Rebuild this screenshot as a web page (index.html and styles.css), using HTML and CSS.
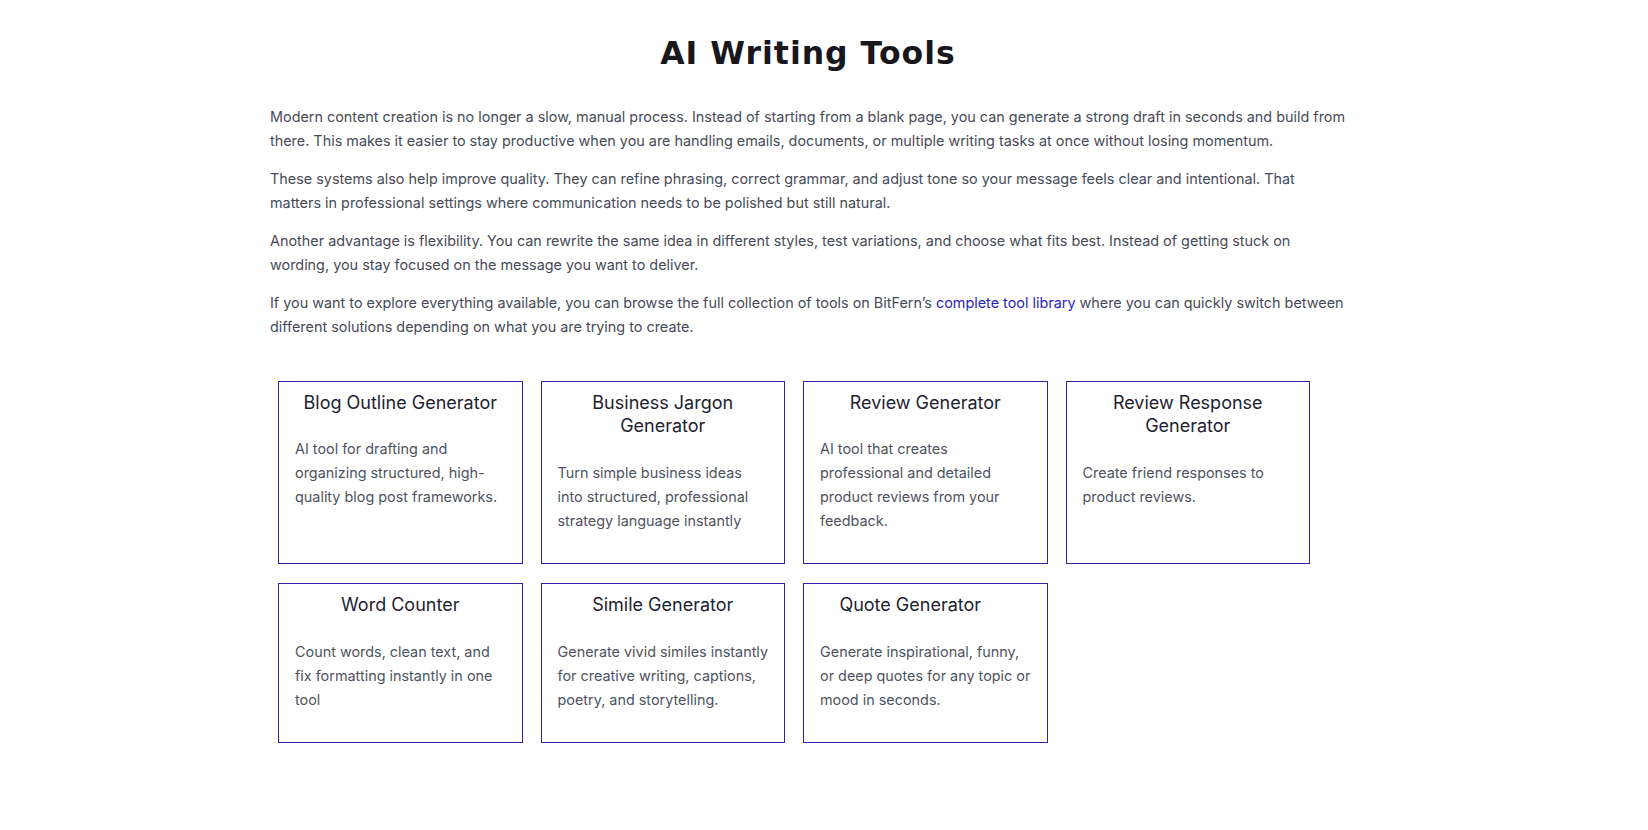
FILE: index.html
```html
<!DOCTYPE html>
<html lang="en">
<head>
<meta charset="utf-8">
<title>AI Writing Tools</title>
<link rel="stylesheet" href="styles.css">
</head>
<body>
<main class="page">
  <h1 class="page-title">AI Writing Tools</h1>
  <section class="intro">
    <p>Modern content creation is no longer a slow, manual process. Instead of starting from a blank page, you can generate a strong draft in seconds and build from there. This makes it easier to stay productive when you are handling emails, documents, or multiple writing tasks at once without losing momentum.</p>
    <p>These systems also help improve quality. They can refine phrasing, correct grammar, and adjust tone so your message feels clear and intentional. That matters in professional settings where communication needs to be polished but still natural.</p>
    <p>Another advantage is flexibility. You can rewrite the same idea in different styles, test variations, and choose what fits best. Instead of getting stuck on wording, you stay focused on the message you want to deliver.</p>
    <p>If you want to explore everything available, you can browse the full collection of tools on BitFern’s <a class="link" href="#">complete tool library</a> where you can quickly switch between different solutions depending on what you are trying to create.</p>
  </section>
  <section class="tools">
    <article class="card">
      <h3 class="card-title">Blog Outline Generator</h3>
      <p class="card-desc">AI tool for drafting and organizing structured, high-quality blog post frameworks.</p>
    </article>
    <article class="card">
      <h3 class="card-title">Business Jargon Generator</h3>
      <p class="card-desc">Turn simple business ideas into structured, professional strategy language instantly</p>
    </article>
    <article class="card">
      <h3 class="card-title">Review Generator</h3>
      <p class="card-desc">AI tool that creates professional and detailed product reviews from your feedback.</p>
    </article>
    <article class="card">
      <h3 class="card-title">Review Response Generator</h3>
      <p class="card-desc">Create friend responses to product reviews.</p>
    </article>
    <article class="card">
      <h3 class="card-title">Word Counter</h3>
      <p class="card-desc">Count words, clean text, and fix formatting instantly in one tool</p>
    </article>
    <article class="card">
      <h3 class="card-title">Simile Generator</h3>
      <p class="card-desc">Generate vivid similes instantly for creative writing, captions, poetry, and storytelling.</p>
    </article>
    <article class="card">
      <h3 class="card-title card-title--offset">Quote Generator</h3>
      <p class="card-desc">Generate inspirational, funny, or deep quotes for any topic or mood in seconds.</p>
    </article>
  </section>
</main>
</body>
</html>
```
FILE: styles.css
```css
* { box-sizing: border-box; }

html, body {
  margin: 0;
  padding: 0;
  background: #ffffff;
}

body {
  font-family: Inter, "Noto Sans", "Liberation Sans", sans-serif;
  color: #474b57;
}

.page {
  width: 1076px;
  margin-left: calc(50% - 554px);
  padding-top: 32px;
}

.page-title {
  margin: 0 0 31px;
  text-align: center;
  font-family: "DejaVu Sans", "Liberation Sans", sans-serif;
  font-weight: 700;
  font-size: 31.5px;
  line-height: 42px;
  letter-spacing: 1px;
  color: #17171c;
}

.intro p {
  margin: 0 0 14px;
  font-size: 14.4px;
  line-height: 24px;
}

.intro p:last-child { margin-bottom: 0; }

.link {
  color: #2a1fbf;
  text-decoration: none;
}

.tools {
  display: grid;
  grid-template-columns: repeat(4, 244.5px);
  column-gap: 18px;
  row-gap: 19px;
  padding-left: 8px;
  margin-top: 42px;
}

.card {
  border: 1px solid #2d22a8;
  padding: 9px 16px 30px;
}

.card-title {
  margin: 0 0 23px;
  text-align: center;
  font-size: 18px;
  font-weight: 400;
  line-height: 23.4px;
  color: #1e2230;
}

.card-title--offset { padding-right: 30px; }

.card-desc {
  margin: 0;
  font-size: 14.4px;
  line-height: 24px;
  color: #4f5360;
}
```
